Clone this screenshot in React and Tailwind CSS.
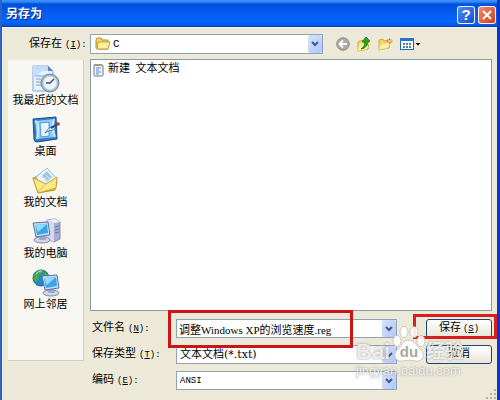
import React from "react";

const cjk = "font-['Liberation_Mono','Noto_Sans_CJK_SC',monospace]";

function Hint({ letter }) {
  return (
    <span className="ml-[3px] text-[9px]">
      (<u>{letter}</u>):
    </span>
  );
}

function Arrow() {
  return (
    <span className="pointer-events-none absolute inset-y-px right-px flex w-[14px] items-center justify-center rounded-xs bg-linear-to-br from-[#d5e2fd] to-[#afc7f7]">
      <svg width="8" height="6" viewBox="0 0 8 6" fill="none" stroke="#3d5a8c" strokeWidth="2">
        <path d="M1 1l3 3 3-3" />
      </svg>
    </span>
  );
}

const box =
  "block w-full appearance-none rounded-none border border-[#8fa3b5] bg-white p-0 text-black outline-none";

function RecentIcon() {
  return (
    <svg width="30" height="28" viewBox="0 0 30 28">
      <path d="M2 1h15l5 5v20H2z" fill="#e9f3ff" stroke="#7fa5d8" />
      <path d="M2 1h15l5 5H11L2 14z" fill="#c2dcfa" />
      <path d="M17 1v5h5z" fill="#4f87cf" />
      <path d="M5 11h8M5 14h5M5 17h5M5 20h6" stroke="#6f9fd9" />
      <circle cx="19" cy="18" r="9" fill="#a9b8c8" stroke="#71849b" />
      <circle cx="19" cy="18" r="6.7" fill="#eaf7ff" stroke="#c8d8e8" />
      <path d="M19 18l4-4M19 18h-4" stroke="#35537d" strokeWidth="1.5" />
      <circle cx="19" cy="18" r="1" fill="#d44" />
    </svg>
  );
}

function DesktopIcon() {
  return (
    <svg width="30" height="28" viewBox="0 0 30 28">
      <path d="M2 3l23-2 1 22-20 3q-3 0-3-3z" fill="#2f7cc4" stroke="#15528f" />
      <path d="M4 5l19-2 1 18-18 2z" fill="#8fcbf5" />
      <path d="M4 5q5 2 2 18M23 3q-3 9 1 18" fill="none" stroke="#c9e9fd" strokeWidth="2" />
      <path d="M9 7l9-1v14l-8 1z" fill="#e9f6ff" stroke="#5797cc" />
      <path d="M14 17l3-4 5-3 3 1-3 3-5 1z" fill="#fff" stroke="#256199" strokeWidth=".8" />
      <path d="M20 12l6-3" stroke="#244e80" strokeWidth="2" />
      <circle cx="27" cy="8" r="1.8" fill="#b83236" />
    </svg>
  );
}

function DocumentsIcon() {
  return (
    <svg width="30" height="28" viewBox="0 0 30 28">
      <path d="M2 11l5-2 4 3h13l2 3-2 8-17 3z" fill="#f0cb52" stroke="#b99024" />
      <path d="M5 10L16 1l9 10-11 12z" fill="#eef7ff" stroke="#9ab8d3" />
      <path d="M11 9l5-5 5 6-5 5z" fill="#91c6eb" />
      <path d="M13 10l4 4M15 8l4 4" stroke="#fff" />
      <path d="M2 11l9 4 4 2 11-7-1 11-18 5z" fill="#ffe987" stroke="#caa131" />
      <path d="M15 17L7 25" stroke="#e3b941" />
    </svg>
  );
}

function Monitor({ x = 0, y = 0 }) {
  return (
    <g transform={`translate(${x} ${y})`}>
      <ellipse cx="10" cy="19" rx="8" ry="3" fill="#d3d6ea" stroke="#8389ac" />
      <path d="M8 14h5l1 5H7z" fill="#9aa6c9" />
      <path d="M1 2l15-1 2 13-14 2z" fill="#cbdcf2" stroke="#58779f" />
      <path d="M3 4l12-1 1 9-11 2z" fill="#3ba3ea" />
      <path d="M3 4l12-1-9 8z" fill="#8eddff" />
    </g>
  );
}

function ComputerIcon() {
  return (
    <svg width="30" height="28" viewBox="0 0 30 28">
      <path d="M16 2l8-1 5 3v17l-6 3-7-3z" fill="#a9acd2" stroke="#8588b0" />
      <path d="M16 2l7 3v19l-7-3z" fill="#d7d9ed" />
      <path d="M16 2l8-1 5 3-6 1z" fill="#eef0fa" />
      <path d="M24 9l4-1M24 12l4-1M24 15l4-1" stroke="#6d739f" />
      <Monitor x={1} y={3} />
    </svg>
  );
}

function NetworkIcon() {
  return (
    <svg width="30" height="28" viewBox="0 0 30 28">
      <circle cx="10" cy="9" r="8" fill="#2b83d3" stroke="#246497" />
      <path d="M3 6q3-6 9-5l-1 4-4 2 1 4-4 2q-2-3-1-7zM13 3q5 2 5 7l-4 5-3-5z" fill="#43ad43" />
      <path d="M5 5q3-4 6-3" stroke="#bde9c0" fill="none" />
      <Monitor x={10} y={5} />
    </svg>
  );
}

const places = [
  ["我最近的文档", RecentIcon],
  ["桌面", DesktopIcon],
  ["我的文档", DocumentsIcon],
  ["我的电脑", ComputerIcon],
  ["网上邻居", NetworkIcon],
];

function Toolbar() {
  return (
    <div className="flex w-[169px] shrink-0 items-center gap-[7px] pl-[13px]">
      <button aria-label="后退" className="flex">
        <svg width="14" height="14" viewBox="0 0 14 14">
          <circle cx="7" cy="7" r="6.3" fill="#aaa9a3" stroke="#908f89" />
          <path d="M11 7H4M7 3.5L3.5 7 7 10.500" fill="none" stroke="#fff" strokeWidth="1.800" />
        </svg>
      </button>
      <button aria-label="向上一级" className="flex">
        <svg width="14" height="16" viewBox="0 0 14 16">
          <path d="M1 6l4-2 1 2 6-1-1 8-10 2z" fill="#f8dd75" stroke="#c6a43a" />
          <path d="M2 9l10-2-2 6-9 2z" fill="#fff0a0" />
          <path d="M4 13q4-2 4-7H5l4-5 4 4-2 .5q0 6-7 7.500z" fill="#2ba51e" stroke="#187611" strokeWidth=".8" />
        </svg>
      </button>
      <button aria-label="新建文件夹" className="flex">
        <svg width="15" height="14" viewBox="0 0 15 14">
          <path d="M1 3l4-1 1 2 6-1-1 8-10 2z" fill="#f5d568" stroke="#d0a943" />
          <path d="M2 7l11-2-3 6-9 2z" fill="#fff0a5" stroke="#e4c25b" strokeWidth=".6" />
          <path d="M11.500 1v6M8.500 4h6M9.500 2l4 4M13.500 2l-4 4" stroke="#db7038" strokeWidth=".9" />
          <circle cx="11.500" cy="4" r="1" fill="#fff2bd" />
        </svg>
      </button>
      <button aria-label="查看" className="flex">
        <svg width="21" height="14" viewBox="0 0 21 14">
          <rect x=".5" y="1.500" width="13" height="11" fill="#fff" stroke="#2368ab" />
          <path d="M0 1h14v3H0z" fill="#2674cb" />
          <path d="M3 6h2v2H3zM6 6h2v2H6zM9 6h2v2H9zM3 9h2v2H3zM6 9h2v2H6zM9 9h2v2H9z" fill="#537dac" />
          <path d="M15.500 6h5L18 8.500z" fill="#000" />
        </svg>
      </button>
    </div>
  );
}

function Watermark() {
  return (
    <div className="pointer-events-none absolute top-[7px] right-[24px] w-[112px] font-['Liberation_Sans','Noto_Sans_CJK_SC',sans-serif] font-bold text-white/80 [text-shadow:0_0_2px_rgba(90,90,80,0.7)]">
      <div className="flex items-end">
        <span className="w-[36px] text-[22px] leading-[22px]">Bai</span>
        <svg width="34" height="37" viewBox="0 0 34 37" className="shrink-0">
          <g fill="#fff" fillOpacity=".9" stroke="#bbb9ae" strokeWidth=".7">
            <ellipse cx="5" cy="15" rx="4" ry="5.500" />
            <ellipse cx="12" cy="6" rx="4" ry="5.500" />
            <ellipse cx="22" cy="6" rx="4" ry="5.500" />
            <ellipse cx="29" cy="15" rx="4" ry="5.500" />
            <path d="M17 14c6 0 7 6 11 9 6 5 3 13-4 12-5-1-9-1-14 0-7 1-10-7-4-12 4-3 5-9 11-9z" />
          </g>
          <text x="17" y="31" textAnchor="middle" fontSize="15" fontWeight="bold" fill="#aaa79b" style={{ textShadow: "none" }}>du</text>
        </svg>
        <span className="text-[19px] leading-[22px] whitespace-nowrap">经验</span>
      </div>
      <div className="mt-px text-[13px] leading-[14px] font-normal">jingyan.baidu.com</div>
    </div>
  );
}

const xpButton =
  "block h-[19px] w-full rounded-[3px] border border-[#1c4472] bg-linear-to-b from-white to-[#e8e6da] text-[11px] leading-[15px] text-black";

export default function App() {
  return (
    <div className={`flex min-h-screen flex-col border-r-3 border-l-2 border-r-[#0a35cf] border-l-[#2c62c0] bg-[#ece9d8] text-[11px] leading-[14px] text-black ${cjk}`}>
      <header className="flex h-[27px] items-center justify-between border-b border-[#0a3cb4] bg-[linear-gradient(#3f97fb_0,#2c86f5_2px,#0150dd_4px,#0559ec_12px,#0565fc_22px,#0353df_26px)] pt-[3px] pr-px pl-[4px]">
        <h1 className="text-[12px] leading-[16px] font-bold text-white [text-shadow:1px_1px_0_#0a2f8c]">另存为</h1>
        <div className="flex gap-[3px]">
          <button aria-label="帮助" className="flex size-[18px] items-center justify-center rounded-[3px] border border-white/90 bg-linear-to-br from-[#4d88f5] to-[#164fcf] font-['Liberation_Sans',sans-serif] text-[15px] leading-none font-bold text-white">
            ?
          </button>
          <button aria-label="关闭" className="flex size-[18px] items-center justify-center rounded-[3px] border border-white/90 bg-linear-to-br from-[#ed8b6c] to-[#cf3b16]">
            <svg width="10" height="10" viewBox="0 0 10 10" stroke="#fff" strokeWidth="2">
              <path d="M1 1l8 8M9 1L1 9" />
            </svg>
          </button>
        </div>
      </header>

      <main className="border-t border-[#f7f6ef] pt-[6px] pr-[5px] pl-[6px]">
        <div className="flex items-center">
          <label htmlFor="folder" className="w-[82px] shrink-0 pl-[21px] whitespace-nowrap">
            保存在<Hint letter="I" />
          </label>
          <div className="relative flex-1">
            <select id="folder" className={`${box} h-[20px] pl-[22px] text-[11px]`}>
              <option>C</option>
            </select>
            <svg width="16" height="14" viewBox="0 0 16 14" className="pointer-events-none absolute top-[3px] left-[5px]">
              <path d="M1 3q0-2 2-2h3l1 2h6v9H3q-2 0-2-2z" fill="#f3d767" stroke="#b08d28" />
              <path d="M3 5h12l-2 7H2z" fill="#fff0a0" stroke="#c29c31" />
            </svg>
            <Arrow />
          </div>
          <Toolbar />
        </div>

        <div className="mt-[5px] flex gap-[6px]">
          <nav className="mt-px flex h-[301px] w-[76px] shrink-0 flex-col border-r border-b border-[#d3d0c1] bg-[#f8f7f2] pt-[5px]">
            {places.map(([name, Icon]) => (
              <button key={name} className="flex h-[51px] flex-col items-center leading-[16px] whitespace-nowrap">
                <Icon />
                {name}
              </button>
            ))}
          </nav>

          <div className="min-w-0 flex-1">
            <div className="h-[252px] border border-[#8c9aa5] bg-white px-[2px] pt-px">
              <button className="flex items-center gap-[3px] leading-[16px]">
                <svg width="12" height="14" viewBox="0 0 12 14">
                  <rect x="1" y="2" width="9" height="11" rx="1" fill="#f6faff" stroke="#66788f" />
                  <path d="M2 1v2M4 1v2M6 1v2M8 1v2" stroke="#9a7848" />
                  <path d="M3 5h5M3 7h3M3 9h5M3 11h3" stroke="#5085bd" />
                </svg>
                <span>
                  新建<span className="text-[9px]"> </span>文本文档
                </span>
              </button>
            </div>

            <div className="relative mt-[8px] flex">
              <div className="grid flex-1 grid-cols-[86px_1fr] items-center gap-y-[7px]">
                <label htmlFor="name" className="pl-[2px]">文件名<Hint letter="N" /></label>
                <div className="relative">
                  <input id="name" defaultValue="调整Windows XP的浏览速度.reg" className={`${box} h-[19px] pl-[2px] font-['Liberation_Serif','Noto_Sans_CJK_SC',serif] text-[11px]`} />
                  <Arrow />
                  <div className="pointer-events-none absolute -top-[9px] -left-[8px] z-10 h-[38px] w-[185px] border-3 border-[#cc1418]" />
                </div>
                <label htmlFor="type" className="pl-[2px]">保存类型<Hint letter="T" /></label>
                <div className="relative">
                  <select id="type" className={`${box} h-[19px] pl-[3px] font-['DejaVu_Serif','Noto_Sans_CJK_SC',serif] text-[11px]`}>
                    <option>文本文档(*.txt)</option>
                  </select>
                  <Arrow />
                </div>
                <label htmlFor="encoding" className="pl-[2px]">编码<Hint letter="E" /></label>
                <div className="relative">
                  <select id="encoding" className={`${box} h-[19px] pl-[3px] text-[9px]`}>
                    <option>ANSI</option>
                  </select>
                  <Arrow />
                </div>
              </div>
              <div className="ml-[29px] flex w-[66px] shrink-0 flex-col gap-[7px]">
                <div className="relative">
                  <button className={xpButton}>
                    保存<span className="ml-[2px] text-[9px]">(<u>S</u>)</span>
                  </button>
                  <div className="pointer-events-none absolute -top-[5px] -right-[5px] -left-[13px] h-[25px] border-3 border-[#d81e20]" />
                </div>
                <button className={xpButton}>取消</button>
              </div>
              <Watermark />
            </div>
          </div>
        </div>
      </main>

      <footer className="mt-auto flex h-0 items-end justify-end">
        <svg width="11" height="11" viewBox="0 0 11 11" fill="#b5b19c">
          <path d="M8 0h2v2H8zM8 4h2v2H8zM4 4h2v2H4zM8 8h2v2H8zM4 8h2v2H4zM0 8h2v2H0z" />
        </svg>
      </footer>
    </div>
  );
}
